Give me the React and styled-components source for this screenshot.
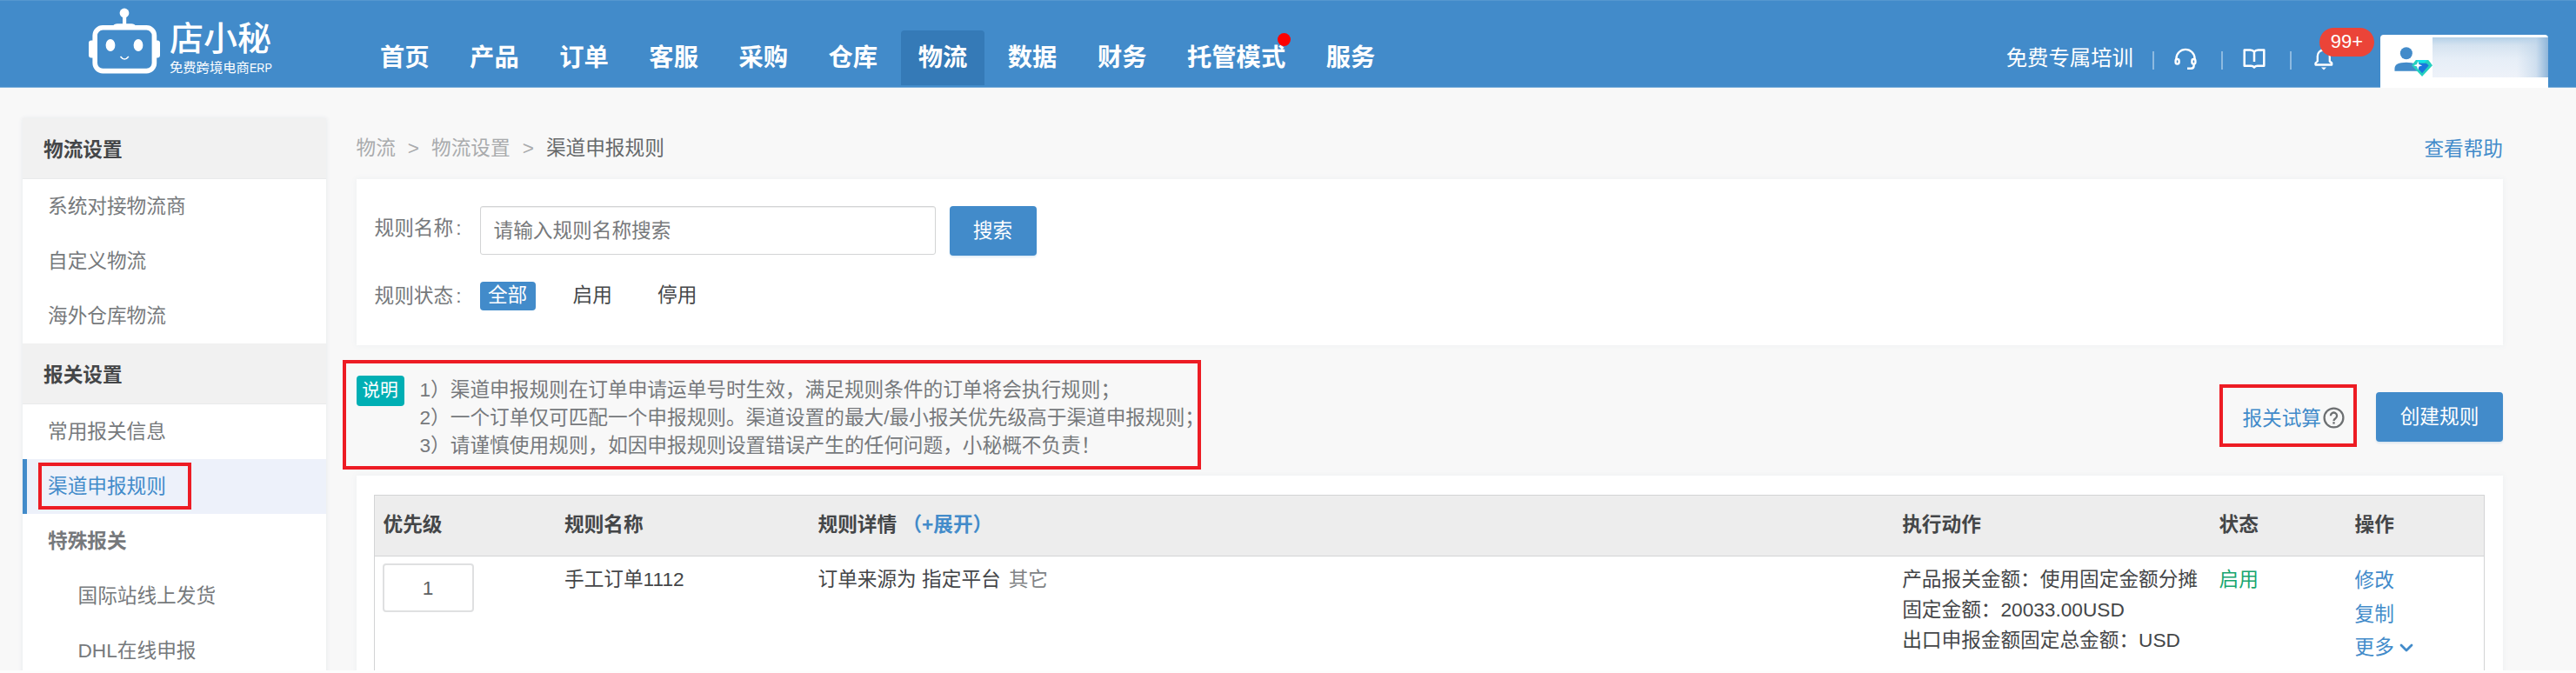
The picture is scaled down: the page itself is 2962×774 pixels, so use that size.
import React from "react"
import styled, { createGlobalStyle } from "styled-components"
import { FiChevronDown } from "react-icons/fi"

const Colors = {
  blue: "#428bca",
  blueDark: "#357ab7",
  page: "#f8f8f8",
  text: "#444648",
  textLight: "#76797c",
  muted: "#a9abad",
  line: "#d3d4d5",
  red: "#ed1c24",
  green: "#18a56f",
}

const GlobalStyle = createGlobalStyle`
  * {
    box-sizing: border-box;
  }
  body {
    margin: 0;
    background-color: #fdfdfd;
    font-family: "Liberation Sans", "Noto Sans CJK SC", sans-serif;
    font-size: 22.66px;
    line-height: 32px;
    color: ${Colors.text};
  }
  a {
    color: ${Colors.blue};
    text-decoration: none;
  }
`

const Page = styled.div`
  width: 2962px;
  height: 771px;
  overflow: hidden;
  background-color: ${Colors.page};
`

const Header = styled.header`
  display: flex;
  height: 101px;
  padding-left: 100px;
  background-color: ${Colors.blue};
  border-top: 1px solid #5597d0;
  border-bottom: 1px solid #7fb1dc;
  color: white;
`

const Logo = styled.div`
  display: flex;
  width: 317px;
`

const LogoText = styled.div`
  padding: 18px 0 0 9px;
`

const LogoName = styled.div`
  margin-bottom: 5px;
  font-size: 39px;
  line-height: 44px;
  font-weight: 500;
  font-family: "Noto Sans CJK SC", sans-serif;
  white-space: nowrap;
`

const LogoSub = styled.div`
  display: flex;
  font-size: 15.3px;
  line-height: 20px;
  white-space: nowrap;
  span {
    display: inline-block;
    transform: scaleX(0.82);
    transform-origin: left;
  }
`

const Nav = styled.nav`
  display: flex;
  gap: 6.5px;
  padding-top: 34px;
`

const NavItem = styled.div`
  position: relative;
  height: 63px;
  padding: 0 20px;
  border-radius: 4px 4px 0 0;
  background-color: ${props => (props.$active ? Colors.blueDark : "transparent")};
  font-size: 28.3px;
  line-height: 62px;
  font-weight: 700;
`

const Dot = styled.i`
  position: absolute;
  top: 3px;
  right: 14px;
  width: 15px;
  height: 15px;
  border-radius: 50%;
  background-color: #ff0000;
`

const HeaderTools = styled.div`
  display: flex;
  margin-left: auto;
  padding-top: 39px;
  font-size: 24.4px;
  line-height: 53px;
`

const ToolIcon = styled.div`
  position: relative;
  display: flex;
  align-items: center;
  width: 79px;
  height: 56px;
  padding-left: 22px;
  &:before {
    content: "";
    width: 2px;
    height: 21px;
    margin-top: 2px;
    margin-right: 23px;
    background-color: #8dbae0;
  }
`

const Count = styled.span`
  position: absolute;
  top: -8px;
  left: 56px;
  width: 63px;
  height: 33px;
  border-radius: 17px;
  background-color: #eb4438;
  font-size: 22px;
  line-height: 32px;
  text-align: center;
`

const UserTab = styled.div`
  display: flex;
  width: 193px;
  height: 61px;
  margin: 0 32px 0 47px;
  padding: 3px 0 0 16px;
  border-radius: 4px 4px 0 0;
  background-color: white;
`

const UserMask = styled.div`
  flex: none;
  width: 133px;
  height: 46px;
  background: linear-gradient(to left, #8fb6da 0, rgba(190, 212, 233, 0.6) 14px, transparent 36px),
    linear-gradient(#b3d0e8 0, #d5e3f0 9px, #e6eef7 24px, #eef2f9 46px);
`

const Body = styled.div`
  display: flex;
  align-items: flex-start;
  gap: 35px;
  padding-left: 25.5px;
`

const Sidebar = styled.aside`
  position: relative;
  flex: none;
  width: 349px;
  height: 660px;
  margin-top: 35px;
  background-color: white;
  box-shadow: 0 0 5px #e4e7ea;
`

const SideTitle = styled.div`
  height: 70px;
  padding: 20px 24.5px;
  background-color: #f1f1f1;
  border-bottom: 1px solid #e9eaeb;
  font-weight: 700;
`

const SideGroup = styled.div`
  height: 189px;
`

const SideItem = styled.div`
  height: 63px;
  padding: 15px 0 0 ${props => (props.$sub ? 59 : 24.5)}px;
  border-left: 5px solid ${props => (props.$active ? Colors.blue : "transparent")};
  background-color: ${props => (props.$active ? "#edf1fa" : "transparent")};
  color: ${props => (props.$active ? Colors.blue : Colors.textLight)};
  font-weight: ${props => (props.$bold ? 700 : 400)};
`

const Marker = styled.div`
  position: absolute;
  top: ${props => props.$top}px;
  left: ${props => props.$left}px;
  width: ${props => props.$width}px;
  height: ${props => props.$height}px;
  border: 4px solid ${Colors.red};
`

const Main = styled.main`
  width: 2468.5px;
`

const TopLine = styled.div`
  display: flex;
  align-items: center;
  height: 105px;
  padding-top: 33px;
  color: ${Colors.muted};
  a {
    margin-left: auto;
    padding-top: 2px;
  }
`

const Arrow = styled.span`
  margin: 0 14px;
`

const Current = styled.span`
  color: #66696b;
`

const Panel = styled.section`
  height: ${props => props.$height}px;
  padding: ${props => props.$pad};
  background-color: white;
  box-shadow: 0 0 6px 1px #eff1f3;
`

const FormRow = styled.div`
  display: flex;
  margin-bottom: 30px;
`

const Label = styled.div`
  width: 121px;
  padding-top: ${props => props.$top}px;
  color: ${Colors.textLight};
  span {
    margin-left: 3px;
  }
`

const SearchInput = styled.input`
  width: 524px;
  height: 56px;
  padding: 0 15px;
  border: 1px solid ${Colors.line};
  border-radius: 3px;
  font: inherit;
  box-shadow: inset 0 1px 1px rgba(0, 0, 0, 0.07);
  &::placeholder {
    color: #77797b;
  }
`

const Button = styled.button`
  width: ${props => props.$width}px;
  height: 57px;
  margin-left: ${props => props.$left}px;
  padding: 0 0 2px;
  border: none;
  border-radius: 4px;
  background-color: ${Colors.blue};
  box-shadow: 0 2px 2px rgba(66, 139, 202, 0.15);
  color: white;
  font: inherit;
`

const Option = styled.span`
  height: 33px;
  margin-right: 33.5px;
  padding: 0 9.4px;
  border-radius: 4px;
  background-color: ${props => (props.$active ? Colors.blue : "transparent")};
  color: ${props => (props.$active ? "white" : Colors.text)};
  line-height: 31px;
`

const Notice = styled.div`
  position: relative;
  display: flex;
  align-items: flex-start;
  height: 150px;
  padding-top: 35px;
`

const NoticeTag = styled.span`
  width: 55px;
  height: 35px;
  margin-right: 18px;
  border-radius: 4px;
  background-color: #00afb4;
  color: white;
  font-size: 20.8px;
  line-height: 34px;
  text-align: center;
`

const NoticeText = styled.div`
  margin-top: -0.5px;
  color: ${Colors.textLight};
`

const NoticeActions = styled.div`
  display: flex;
  align-items: center;
  margin-left: auto;
  padding-top: 19px;
  a {
    padding-top: 3px;
  }
  svg {
    margin: 2px 0 0 2px;
  }
`

const Row = styled.div`
  display: grid;
  grid-template-columns: 208.5px 291.5px 1246.7px 364.3px 156px 1fr;
  padding-left: 10px;
  border: 1px solid ${Colors.line};
`

const HeadRow = styled(Row)`
  height: 71px;
  background-color: #ededed;
  font-weight: 700;
  line-height: 66px;
`

const BodyRow = styled(Row)`
  height: 200px;
  border-top: none;
  padding-top: 8px;
`

const Cell = styled.div`
  padding-top: ${props => props.$top || 0}px;
  line-height: ${props => props.$line || 35}px;
  color: ${props => props.$color || Colors.text};
  white-space: nowrap;
`

const PriorityInput = styled.input`
  width: 105px;
  height: 56px;
  margin-left: -1px;
  border: 2px solid #dfe0e1;
  border-radius: 4px;
  font: inherit;
  color: #5d6062;
  text-align: center;
`

const Platform = styled.span`
  margin-left: 9px;
  color: #808386;
`

const Op = styled.a`
  display: flex;
  align-items: center;
  svg {
    margin: 2px 0 0 2px;
    font-size: 24px;
    stroke-width: 2.8;
  }
`

const Robot = () => (
  <svg width="86" height="99" viewBox="100 1 86 99" fill="white">
    <circle cx="143" cy="15" r="5.4" />
    <path d="M141 18h4.2v10H141zM130 30q1-2.8 5-2.8h16q4 0 5 2.8zM107 46.5h-2q-3 0-3 3v14q0 3 3 3h2zM180 46.5h1q3 0 3 3v14q0 3-3 3h-1z" />
    <rect x="109.2" y="31.8" width="68.2" height="49.8" rx="9" fill="none" stroke="white" strokeWidth="5.6" />
    <ellipse cx="127" cy="52" rx="5.4" ry="7" />
    <ellipse cx="159" cy="52" rx="5.4" ry="7" />
    <path d="M138.5 65q4.7 6 9.4 0" fill="none" stroke="white" strokeWidth="1.6" />
  </svg>
)

const HeadsetIcon = () => (
  <svg width="26" height="26" viewBox="0 0 26 26" fill="none" stroke="white" strokeWidth="2.4">
    <path d="M2.4 13.5v-1a10.6 10.6 0 0 1 21.2 0v1M22.6 18v2.5q0 3.3-3.3 3.3H15" />
    <rect x="1.6" y="13" width="4" height="5.6" rx="2" />
    <rect x="20.4" y="13" width="4" height="5.6" rx="2" />
  </svg>
)

const BookIcon = () => (
  <svg width="26" height="26" viewBox="0 0 26 26" fill="none" stroke="white" strokeWidth="2.5" strokeLinejoin="round">
    <path d="M13 4.5Q11.5 2.5 8.5 2.5H1.7v18.2h7.5q2.5 0 3.8 1.8 1.3-1.8 3.8-1.8h7.5V2.5h-6.8q-3 0-4.5 2zM13 4.5V16" />
  </svg>
)

const BellIcon = () => (
  <svg width="26" height="26" viewBox="-3 0 26 26" fill="none" stroke="white" strokeWidth="2.3" strokeLinejoin="round">
    <path d="M1.5 19.5v-2l2.3-2V9.5a7 7 0 0 1 14 0v6l2.4 2v2z" />
    <path d="M8 22.5h6l-3 3z" fill="white" stroke="none" />
  </svg>
)

const UserIcon = () => (
  <svg width="46" height="48" viewBox="0 0 46 48">
    <circle cx="14.5" cy="18" r="7.3" fill={Colors.blue} />
    <path d="M0.5 39.5v-3q0-7.5 14-7.5t14 7.5v3z" fill={Colors.blue} />
    <path d="M26 26h15l5 6.5-12.5 13.5L21 32.5z" fill="#25d0c0" />
    <path d="M27 26h13l-4 3.5h-6z" fill="#14e0e8" />
    <path d="M29 30h9.5l3 2.5-8 9.5-8-9.5z" fill="#1976dc" />
    <path d="M28.5 27.5l1.3 3.9 3.9 1.3-3.9 1.3-1.3 3.9-1.3-3.9-3.9-1.3 3.9-1.3z" fill="white" />
  </svg>
)

const HelpIcon = () => (
  <svg width="25" height="25" viewBox="0 0 25 25" fill="none" stroke="#6d7072" strokeWidth="2.3">
    <circle cx="12.5" cy="12.5" r="10.9" />
    <path d="M8.9 10.2a3.6 3.6 0 1 1 5.5 3q-1.9 1.2-1.9 2.8" />
    <path d="M12.5 17.2v2.4" />
  </svg>
)

const menu = ["首页", "产品", "订单", "客服", "采购", "仓库", "物流", "数据", "财务", "托管模式", "服务"]

const App = () => (
  <>
    <GlobalStyle />
    <Page>
      <Header>
        <Logo>
          <Robot />
          <LogoText>
            <LogoName>店小秘</LogoName>
            <LogoSub>
              免费跨境电商<span>ERP</span>
            </LogoSub>
          </LogoText>
        </Logo>
        <Nav>
          {menu.map(item => (
            <NavItem key={item} $active={item === "物流"}>
              {item}
              {item === "托管模式" && <Dot />}
            </NavItem>
          ))}
        </Nav>
        <HeaderTools>
          免费专属培训
          <ToolIcon>
            <HeadsetIcon />
          </ToolIcon>
          <ToolIcon>
            <BookIcon />
          </ToolIcon>
          <ToolIcon>
            <BellIcon />
            <Count>99+</Count>
          </ToolIcon>
          <UserTab>
            <UserIcon />
            <UserMask />
          </UserTab>
        </HeaderTools>
      </Header>
      <Body>
        <Sidebar>
          <SideTitle>物流设置</SideTitle>
          <SideGroup>
            <SideItem>系统对接物流商</SideItem>
            <SideItem>自定义物流</SideItem>
            <SideItem>海外仓库物流</SideItem>
          </SideGroup>
          <SideTitle>报关设置</SideTitle>
          <SideItem>常用报关信息</SideItem>
          <SideItem $active>渠道申报规则</SideItem>
          <SideItem $bold>特殊报关</SideItem>
          <SideItem $sub>国际站线上发货</SideItem>
          <SideItem $sub>DHL在线申报</SideItem>
          <Marker $top={396} $left={18.5} $width={176} $height={54} />
        </Sidebar>
        <Main>
          <TopLine>
            物流<Arrow>&gt;</Arrow>物流设置<Arrow>&gt;</Arrow>
            <Current>渠道申报规则</Current>
            <a>查看帮助</a>
          </TopLine>
          <Panel $height={191} $pad="31px 21px">
            <FormRow>
              <Label $top={9}>
                规则名称<span>:</span>
              </Label>
              <SearchInput placeholder="请输入规则名称搜索" />
              <Button $width={100} $left={16}>
                搜索
              </Button>
            </FormRow>
            <FormRow>
              <Label $top={0}>
                规则状态<span>:</span>
              </Label>
              <Option $active>全部</Option>
              <Option>启用</Option>
              <Option>停用</Option>
            </FormRow>
          </Panel>
          <Notice>
            <NoticeTag>说明</NoticeTag>
            <NoticeText>
              1）渠道申报规则在订单申请运单号时生效，满足规则条件的订单将会执行规则；
              <br />
              2）一个订单仅可匹配一个申报规则。渠道设置的最大/最小报关优先级高于渠道申报规则；
              <br />
              3）请谨慎使用规则，如因申报规则设置错误产生的任何问题，小秘概不负责！
            </NoticeText>
            <NoticeActions>
              <a>报关试算</a>
              <HelpIcon />
              <Button $width={146} $left={36}>
                创建规则
              </Button>
            </NoticeActions>
            <Marker $top={17} $left={-15.5} $width={987} $height={126} />
            <Marker $top={45} $left={2142.5} $width={158} $height={72} />
          </Notice>
          <Panel $height={300} $pad="22px 21px 0 20px">
            <HeadRow>
              <span>优先级</span>
              <span>规则名称</span>
              <span>
                规则详情 <a>（+展开）</a>
              </span>
              <span>执行动作</span>
              <span>状态</span>
              <span>操作</span>
            </HeadRow>
            <BodyRow>
              <Cell>
                <PriorityInput defaultValue="1" />
              </Cell>
              <Cell $top={1}>手工订单1112</Cell>
              <Cell $top={1}>
                订单来源为 指定平台<Platform>其它</Platform>
              </Cell>
              <Cell $top={1}>
                产品报关金额：使用固定金额分摊
                <br />
                固定金额：20033.00USD
                <br />
                出口申报金额固定总金额：USD
              </Cell>
              <Cell $top={1} $color={Colors.green}>
                启用
              </Cell>
              <Cell $line={38.5}>
                <Op>修改</Op>
                <Op>复制</Op>
                <Op>
                  更多
                  <FiChevronDown />
                </Op>
              </Cell>
            </BodyRow>
          </Panel>
        </Main>
      </Body>
    </Page>
  </>
)

export default App
